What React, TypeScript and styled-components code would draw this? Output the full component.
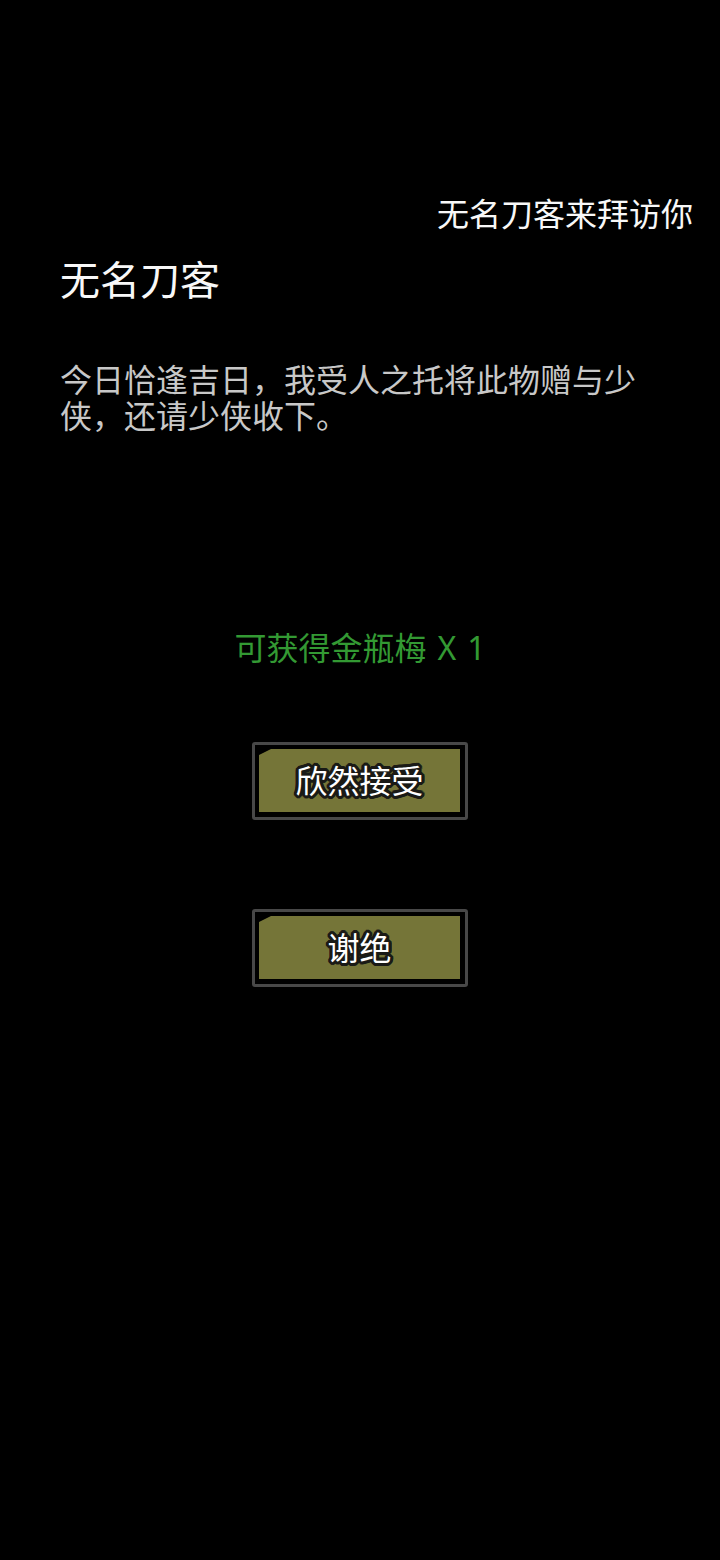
import React from 'react';
import styled, { createGlobalStyle } from 'styled-components';

const GlobalStyle = createGlobalStyle`
  body {
    margin: 0;
    background: #000;
  }
`;

const Wrapper = styled.main`
  display: flex;
  flex-direction: column;
  box-sizing: border-box;
  min-height: 100vh;
  padding: 190px 60px 0;
  background: #000;
  color: #f8f8f8;
  font-family: 'Noto Sans CJK SC', sans-serif;
  font-size: 32px;
`;

const Notice = styled.p`
  align-self: flex-end;
  margin: 0 -33px 0 0;
  line-height: 44px;
`;

const Name = styled.h1`
  margin: 16px 0 0;
  font-size: 40px;
  font-weight: 400;
  line-height: 56px;
`;

const Message = styled.p`
  margin: 54px 0 0;
  color: #c8c8c8;
  line-height: 36px;
`;

const Reward = styled.p`
  display: flex;
  justify-content: center;
  gap: 11px;
  margin: 192px 0 0;
  color: #339933;
  font-family: 'Noto Sans', 'Noto Sans CJK SC', sans-serif;
  line-height: 48px;
`;

const Choices = styled.div`
  display: flex;
  flex-direction: column;
  align-items: center;
  gap: 89px;
  margin-top: 70px;
`;

const Choice = styled.button`
  padding: 4px 5px 5px 4px;
  border: 3px solid #484848;
  border-radius: 3px;
  background: #000;
  color: #fff;
  font: inherit;
  cursor: pointer;
`;

const Plate = styled.span`
  display: block;
  width: 201px;
  padding-bottom: 3px;
  line-height: 60px;
  background: #757538;
  clip-path: polygon(12px 0, 100% 0, 100% 100%, 0 100%, 0 6px);
`;

// a ring of shadows keeps the corners of the outline round
const Outlined = styled.span`
  text-shadow:
    3px 0 #1a1a16,
    -3px 0 #1a1a16,
    0 3px #1a1a16,
    0 -3px #1a1a16,
    2px 2px #1a1a16,
    -2px 2px #1a1a16,
    2px -2px #1a1a16,
    -2px -2px #1a1a16,
    3px 1px #1a1a16,
    3px -1px #1a1a16,
    -3px 1px #1a1a16,
    -3px -1px #1a1a16,
    1px 3px #1a1a16,
    -1px 3px #1a1a16,
    1px -3px #1a1a16,
    -1px -3px #1a1a16,
    1px 0 #1a1a16,
    -1px 0 #1a1a16;
`;

const reward = { name: '金瓶梅', count: 1 };
const choices = ['欣然接受', '谢绝'];

export default function App() {
  return (
    <Wrapper lang="zh-CN">
      <GlobalStyle />
      <Notice>无名刀客来拜访你</Notice>
      <Name>无名刀客</Name>
      <Message>今日恰逢吉日，我受人之托将此物赠与少侠，还请少侠收下。</Message>
      <Reward>
        <span>可获得{reward.name}</span> <span>X</span>{' '}
        <span>{reward.count}</span>
      </Reward>
      <Choices>
        {choices.map((label) => (
          <Choice key={label} type="button">
            <Plate>
              <Outlined>{label}</Outlined>
            </Plate>
          </Choice>
        ))}
      </Choices>
    </Wrapper>
  );
}
